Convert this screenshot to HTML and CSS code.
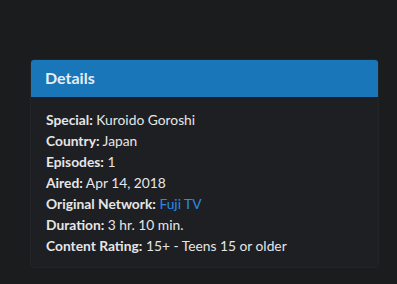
FILE: index.html
```html
<!DOCTYPE html>
<html>
<head>
<meta charset="utf-8">
<link rel="stylesheet" href="styles.css">
</head>
<body>
<div class="card">
  <div class="card-header">Details</div>
  <div class="card-body">
    <div class="row"><b>Special:</b> Kuroido Goroshi</div>
    <div class="row"><b>Country:</b> Japan</div>
    <div class="row"><b>Episodes:</b> 1</div>
    <div class="row"><b>Aired:</b> Apr 14, 2018</div>
    <div class="row"><b>Original Network:</b> <a href="#" class="link">Fuji TV</a></div>
    <div class="row"><b>Duration:</b> 3 hr. 10 min.</div>
    <div class="row"><b>Content Rating:</b> 15+ - Teens 15 or older</div>
  </div>
</div>
</body>
</html>
```
FILE: styles.css
```css
html, body {
  margin: 0;
  padding: 0;
  background: #1b1c1e;
}
body {
  font-family: Lato, "Liberation Sans", sans-serif;
  color: #e6e6e6;
  padding: 59px 18px 0 30px;
}
.card {
  width: 349px;
  box-sizing: border-box;
  background: #1e1f22;
  border: 1px solid #232427;
  border-radius: 4px;
  overflow: hidden;
}
.card-header {
  background: #1976b9;
  color: #e6eef6;
  font-weight: 700;
  font-size: 16px;
  height: 38px;
  line-height: 37px;
  padding: 0 15px;
  margin: -1px -1px 0 -1px;
}
.card-body {
  padding: 12px 15px 11px 15px;
  font-size: 13.8px;
  line-height: 21px;
}
.row b {
  font-weight: 700;
}
.link {
  color: #2a8ce6;
  text-decoration: none;
}
```
